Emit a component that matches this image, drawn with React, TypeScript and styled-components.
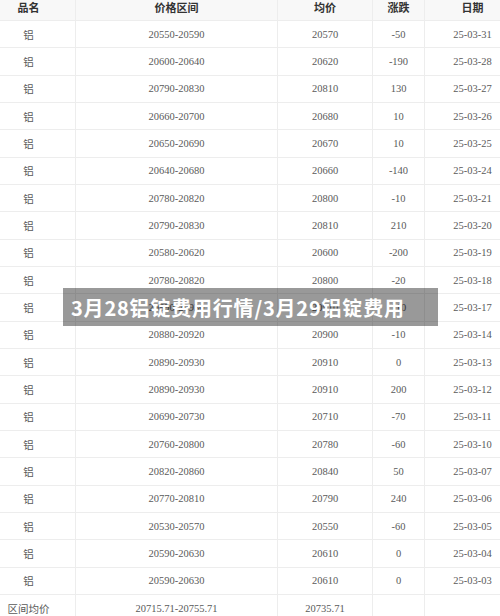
import React from 'react';
import styled, { createGlobalStyle } from 'styled-components';

type PriceRow = {
  name: string;
  range: string;
  avg: string;
  change: string;
  date: string;
};

const ROWS: PriceRow[] = [
  { name: '铝', range: '20550-20590', avg: '20570', change: '-50', date: '25-03-31' },
  { name: '铝', range: '20600-20640', avg: '20620', change: '-190', date: '25-03-28' },
  { name: '铝', range: '20790-20830', avg: '20810', change: '130', date: '25-03-27' },
  { name: '铝', range: '20660-20700', avg: '20680', change: '10', date: '25-03-26' },
  { name: '铝', range: '20650-20690', avg: '20670', change: '10', date: '25-03-25' },
  { name: '铝', range: '20640-20680', avg: '20660', change: '-140', date: '25-03-24' },
  { name: '铝', range: '20780-20820', avg: '20800', change: '-10', date: '25-03-21' },
  { name: '铝', range: '20790-20830', avg: '20810', change: '210', date: '25-03-20' },
  { name: '铝', range: '20580-20620', avg: '20600', change: '-200', date: '25-03-19' },
  { name: '铝', range: '20780-20820', avg: '20800', change: '-20', date: '25-03-18' },
  { name: '铝', range: '20890-20930', avg: '20910', change: '110', date: '25-03-17' },
  { name: '铝', range: '20880-20920', avg: '20900', change: '-10', date: '25-03-14' },
  { name: '铝', range: '20890-20930', avg: '20910', change: '0', date: '25-03-13' },
  { name: '铝', range: '20890-20930', avg: '20910', change: '200', date: '25-03-12' },
  { name: '铝', range: '20690-20730', avg: '20710', change: '-70', date: '25-03-11' },
  { name: '铝', range: '20760-20800', avg: '20780', change: '-60', date: '25-03-10' },
  { name: '铝', range: '20820-20860', avg: '20840', change: '50', date: '25-03-07' },
  { name: '铝', range: '20770-20810', avg: '20790', change: '240', date: '25-03-06' },
  { name: '铝', range: '20530-20570', avg: '20550', change: '-60', date: '25-03-05' },
  { name: '铝', range: '20590-20630', avg: '20610', change: '0', date: '25-03-04' },
  { name: '铝', range: '20590-20630', avg: '20610', change: '0', date: '25-03-03' },
  { name: '区间均价', range: '20715.71-20755.71', avg: '20735.71', change: '', date: '' },
];

const GlobalStyle = createGlobalStyle`
  html, body {
    margin: 0;
    padding: 0;
    background: #ffffff;
    overflow: hidden;
  }
`;

const App = () => (
  <>
    <GlobalStyle />
    <Page>
      <Table>
        <Row header>
          <Cell header>品名</Cell>
          <Cell header>价格区间</Cell>
          <Cell header>均价</Cell>
          <Cell header>涨跌</Cell>
          <Cell header>日期</Cell>
        </Row>
        {ROWS.map((row, i) => (
          <Row key={i}>
            <Cell>{row.name}</Cell>
            <Cell>{row.range}</Cell>
            <Cell>{row.avg}</Cell>
            <Cell>{row.change}</Cell>
            <Cell>{row.date}</Cell>
          </Row>
        ))}
      </Table>
      <Banner>3月28铝锭费用行情/3月29铝锭费用</Banner>
    </Page>
  </>
);

const Page = styled.div`
  position: relative;
  width: 500px;
  height: 616px;
  overflow: hidden;
  background: #ffffff;
`;

const Table = styled.div`
  width: 539px;
  margin: -6.33px 0 0 -18px;
  display: flex;
  flex-direction: column;
`;

const Row = styled.div<{ header?: boolean }>`
  display: grid;
  grid-template-columns: 94px 202px 95px 52px 96px;
  height: 27.33px;
  box-sizing: border-box;
  border-bottom: 1px solid #ededed;
  background: ${({ header }) => (header ? '#f8f8f8' : '#ffffff')};
  flex-shrink: 0;
`;

const Cell = styled.div<{ header?: boolean }>`
  display: flex;
  align-items: center;
  justify-content: center;
  border-right: 1px solid #ededed;
  white-space: nowrap;
  font-family: ${({ header }) =>
    header ? "'Noto Sans CJK SC', 'Noto Sans', sans-serif" : "'Liberation Serif', 'Noto Sans CJK SC', serif"};
  font-size: ${({ header }) => (header ? '11px' : '10.5px')};
  font-weight: ${({ header }) => (header ? 700 : 400)};
  color: ${({ header }) => (header ? '#333333' : '#5a5a5a')};
`;

const Banner = styled.div`
  position: absolute;
  left: 63px;
  top: 288px;
  width: 375px;
  height: 38px;
  box-sizing: border-box;
  padding-left: 8px;
  display: flex;
  align-items: center;
  background: rgba(0, 0, 0, 0.4);
  color: #ffffff;
  font-family: 'Noto Sans CJK SC', 'Noto Sans', sans-serif;
  font-size: 20px;
  font-weight: 700;
  letter-spacing: 0.8px;
  white-space: nowrap;
`;

export default App;
